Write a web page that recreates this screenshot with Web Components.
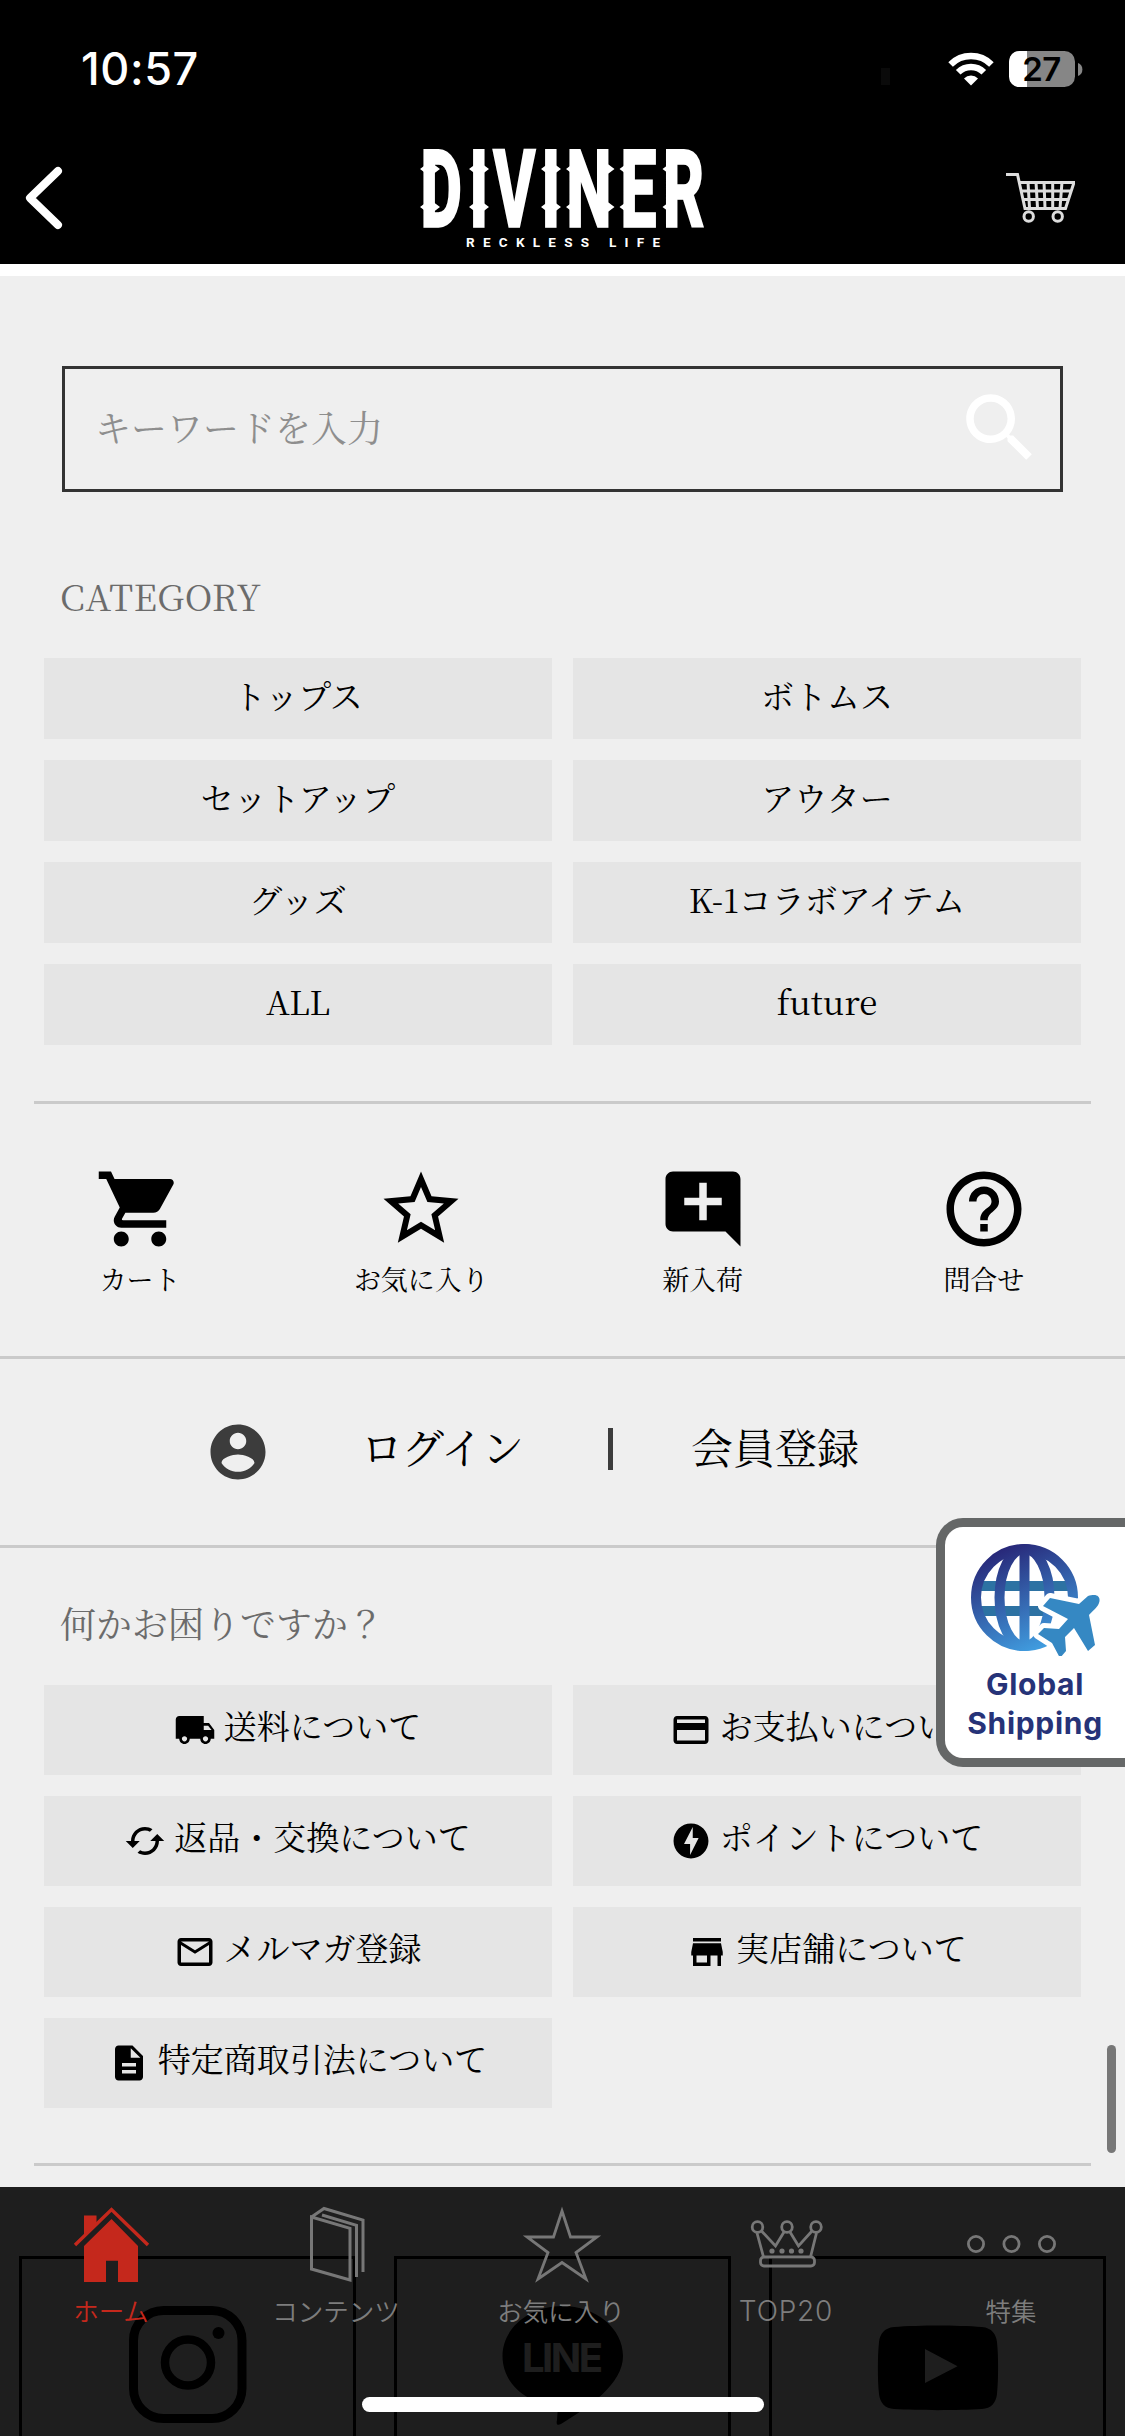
<!DOCTYPE html>
<html lang="ja">
<head>
<meta charset="utf-8">
<title>DIVINER</title>
<style>
html,body{margin:0;padding:0;background:#efefef}
body{width:1125px;height:2436px;overflow:hidden;color:#000;font-family:"Noto Serif CJK JP","Noto Serif JP","Liberation Serif","Noto Sans CJK JP",serif}
</style>
</head>
<body>
<shop-app></shop-app>
<script>
const define = (name, html) => customElements.define(name, class extends HTMLElement {
  connectedCallback() {
    if (this.shadowRoot) return;
    const t = document.createElement('template');
    t.innerHTML = typeof html === 'function' ? html(this) : html;
    this.attachShadow({ mode: 'open' }).appendChild(t.content.cloneNode(true));
  }
});

/* 24-unit filled glyphs */
const GLYPHS = {
  search: 'M15.5 14h-.79l-.28-.27C15.41 12.59 16 11.11 16 9.5 16 5.91 13.09 3 9.5 3S3 5.91 3 9.5 5.91 16 9.5 16c1.61 0 3.09-.59 4.23-1.57l.27.28v.79l5 4.99L20.49 19l-4.99-5zm-6 0C7.01 14 5 11.99 5 9.5S7.01 5 9.5 5 14 7.01 14 9.5 11.99 14 9.5 14z',
  cart: 'M7 18c-1.1 0-1.99.9-1.99 2S5.9 22 7 22s2-.9 2-2-.9-2-2-2zM1 2v2h2l3.6 7.59-1.35 2.45c-.16.28-.25.61-.25.96 0 1.1.9 2 2 2h12v-2H7.42c-.14 0-.25-.11-.25-.25l.03-.12.9-1.63h7.45c.75 0 1.41-.41 1.75-1.03l3.58-6.49c.08-.14.12-.31.12-.48 0-.55-.45-1-1-1H5.21l-.94-2H1zm16 16c-1.1 0-1.99.9-1.99 2s.89 2 1.99 2 2-.9 2-2-.9-2-2-2z',
  star: 'M22 9.24l-7.19-.62L12 2 9.19 8.63 2 9.24l5.46 4.73L5.82 21 12 17.27 18.18 21l-1.63-7.03L22 9.24zM12 15.4l-3.76 2.27 1-4.28-3.32-2.88 4.38-.38L12 6.1l1.71 4.04 4.38.38-3.32 2.88 1 4.28L12 15.4z',
  comment: 'M21.99 4c0-1.1-.89-2-1.99-2H4c-1.1 0-2 .9-2 2v12c0 1.1.9 2 2 2h14l4 4-.01-18zM17 11h-4v4h-2v-4H7V9h4V5h2v4h4v2z',
  help: 'M11 18h2v-2h-2v2zm1-16C6.48 2 2 6.48 2 12s4.48 10 10 10 10-4.48 10-10S17.52 2 12 2zm0 18c-4.41 0-8-3.59-8-8s3.59-8 8-8 8 3.59 8 8-3.59 8-8 8zm0-14c-2.21 0-4 1.79-4 4h2c0-1.1.9-2 2-2s2 .9 2 2c0 2-3 1.75-3 5h2c0-2.25 3-2.5 3-5 0-2.21-1.79-4-4-4z',
  account: 'M12 2C6.48 2 2 6.48 2 12s4.48 10 10 10 10-4.48 10-10S17.52 2 12 2zm0 3c1.66 0 3 1.34 3 3s-1.34 3-3 3-3-1.34-3-3 1.34-3 3-3zm0 14.2c-2.5 0-4.71-1.28-6-3.22.03-1.99 4-3.08 6-3.08 1.99 0 5.97 1.09 6 3.08-1.29 1.94-3.5 3.22-6 3.22z',
  truck: 'M20 8h-3V4H3c-1.1 0-2 .9-2 2v11h2c0 1.66 1.34 3 3 3s3-1.34 3-3h6c0 1.66 1.34 3 3 3s3-1.34 3-3h2v-5l-3-4zM6 18.5c-.83 0-1.5-.67-1.5-1.5s.67-1.5 1.5-1.5 1.5.67 1.5 1.5-.67 1.5-1.5 1.5zm13.5-9l1.96 2.5H17V9.5h2.5zm-1.5 9c-.83 0-1.5-.67-1.5-1.5s.67-1.5 1.5-1.5 1.5.67 1.5 1.5-.67 1.5-1.5 1.5z',
  card: 'M20 4H4c-1.11 0-1.99.89-1.99 2L2 18c0 1.11.89 2 2 2h16c1.11 0 2-.89 2-2V6c0-1.11-.89-2-2-2zm0 14H4v-6h16v6zm0-10H4V6h16v2z',
  cached: 'M19 8l-4 4h3c0 3.31-2.69 6-6 6-1.01 0-1.97-.25-2.8-.7l-1.46 1.46C8.97 19.54 10.43 20 12 20c4.42 0 8-3.58 8-8h3l-4-4zM6 12c0-3.31 2.69-6 6-6 1.01 0 1.97.25 2.8.7l1.46-1.46C15.03 4.46 13.57 4 12 4c-4.42 0-8 3.58-8 8H1l4 4 4-4H6z',
  bolt: 'M12 2.02c-5.51 0-9.98 4.47-9.98 9.98s4.47 9.98 9.98 9.98 9.98-4.47 9.98-9.98S17.51 2.02 12 2.02zM11.48 20v-6.26H8L13 4v6.26h3.35L11.48 20z',
  mail: 'M20 4H4c-1.1 0-1.99.9-1.99 2L2 18c0 1.1.9 2 2 2h16c1.1 0 2-.9 2-2V6c0-1.1-.9-2-2-2zm0 14H4V8l8 5 8-5v10zm-8-7L4 6h16l-8 5z',
  store: 'M20 4H4v2h16V4zm1 10v-2l-1-5H4l-1 5v2h1v6h10v-6h4v6h2v-6h1zm-9 4H6v-4h6v4z',
  doc: 'M14 2H6c-1.1 0-1.99.9-1.99 2L4 20c0 1.1.89 2 1.99 2H18c1.1 0 2-.9 2-2V8l-6-6zm2 16H8v-2h8v2zm0-4H8v-2h8v2zm-3-5V3.5L18.5 9H13z'
};
define('ui-glyph', el => `<style>:host{display:block;flex:none;width:var(--size,42px);height:var(--size,42px)}svg{display:block;width:100%;height:100%;fill:currentColor}</style>
<svg viewBox="0 0 24 24"><path d="${GLYPHS[el.getAttribute('name')]}"/></svg>`);

/* 80-unit line art for the tab bar */
const TABS = {
  home: '<path d="M12 10.500H24.500V22L12 34.500ZM39.500 14 66 41V77H46V55.500H34V77H12V41Z" fill="#c5281c"/><path d="M3 40 39.500 4 76 40" transform="translate(0 4)" fill="none" stroke="#1e1e1e" stroke-width="6"/><path d="M39.500 15.500 66 42V77H46V55.500H33.500V77H12V42Z" fill="#c5281c"/><path d="M3 40 39.500 4.500 76 40" fill="none" stroke="#c5281c" stroke-width="3.400"/>',
  book: '<path d="M14.500 12 53 23.300V75L14.500 64ZM14.500 12 27 3.500 66 15V67M25 10 59.500 20.300V72" fill="none" stroke="#777" stroke-width="3"/>',
  star: '<path d="M40 6 48.500 32H75L54 47.500 64 74 40 57.500 16 74 26 47.500 5 32H31.500Z" fill="none" stroke="#777" stroke-width="2.800"/>',
  crown: '<g fill="none" stroke="#777" stroke-width="2.800"><circle cx="10.500" cy="22" r="5.300"/><circle cx="40" cy="22" r="5.300"/><circle cx="69" cy="22" r="5.300"/><path d="M10 28 16.500 52M14.500 26 28.500 41 37 27M43 27 51.500 41 65 26M69.500 28 63.500 52"/><rect x="13.500" y="52" width="54" height="9" rx="3.500"/></g><g fill="#777"><circle cx="25" cy="46" r="2.600"/><circle cx="35" cy="46" r="2.600"/><circle cx="44.500" cy="46" r="2.600"/><circle cx="54" cy="46" r="2.600"/></g>',
  dots: '<g fill="none" stroke="#777" stroke-width="2.800"><circle cx="4" cy="39" r="7.600"/><circle cx="39.500" cy="39" r="7.600"/><circle cx="75" cy="39" r="7.600"/></g>'
};
define('tab-item', el => `<style>
:host{flex:1;display:flex;flex-direction:column;align-items:center;padding-top:18px;color:#7d7d7d;font:350 25.500px/38px "Noto Sans CJK JP",sans-serif}
:host([active]){color:#c5281c}
:host([latin]){font-family:Inter,sans-serif;font-size:28px;letter-spacing:.8px}
svg{display:block;overflow:visible;margin-left:-2px}
span{display:block;margin-top:6px;margin-left:-3px;white-space:nowrap}
:host([latin]) span{margin-top:7px}
</style><svg width="80" height="80" viewBox="0 0 80 80">${TABS[el.getAttribute('icon')]}</svg><span><slot></slot></span>`);

define('tab-bar', `<style>:host{position:absolute;left:0;right:0;bottom:0;height:249px;background:rgba(0,0,0,.875);display:flex;flex-direction:column;justify-content:space-between;align-items:center}
nav{display:flex;width:100%}i{display:block;width:402px;height:15px;border-radius:8px;background:#fff;margin-bottom:24px}</style>
<nav><tab-item icon="home" active>ホーム</tab-item><tab-item icon="book">コンテンツ</tab-item><tab-item icon="star">お気に入り</tab-item><tab-item icon="crown" latin>TOP20</tab-item><tab-item icon="dots">特集</tab-item></nav><i></i>`);

define('status-bar', `<style>:host{display:flex;height:138px;box-sizing:border-box;align-items:center;padding:0 43px 0 81px;color:#fff;font-family:Inter,sans-serif}
b{font:500 45px/54px Inter,sans-serif;letter-spacing:.6px;flex:1}
i{width:9px;height:17px;background:#0a0a0a;margin:15px 58px 0 0}
svg{overflow:visible}.wifi{margin:0 14px 0 0}</style>
<b>10:57</b><i></i><svg class="wifi" width="46" height="34" viewBox="0 0 46 34"><g fill="none" stroke="#fff" stroke-width="6.500"><path d="M2.600 12.500A29 29 0 0 1 43.400 12.500"/><path d="M10.200 20.300A18 18 0 0 1 35.800 20.300"/></g><path d="M23 33.500 16 26.400A10 10 0 0 1 30 26.400Z" fill="#fff"/></svg>
<svg width="74" height="36" viewBox="0 0 74 36"><defs><clipPath id="c"><rect x="1" width="66" height="36" rx="10.500"/></clipPath></defs><g clip-path="url(#c)"><rect width="67" height="36" fill="#868686"/><rect width="19" height="36" fill="#fff"/></g><path d="M70 12a7 7 0 0 1 0 13Z" fill="#868686"/><text x="33.500" y="30" text-anchor="middle" font-family="Inter,sans-serif" font-weight="600" font-size="33" letter-spacing="-.5" fill="#000">27</text></svg>`);

define('brand-logo', `<style>:host{display:block}svg{display:block;overflow:visible}</style>
<svg width="300" height="108" viewBox="0 0 300 108"><g fill="#fff">
<g transform="translate(0 85.500) scale(.6 1)"><text font-family="Roboto,sans-serif" font-weight="700" font-size="106" stroke="#fff" stroke-width="3.500" y="0" x="12.600 94.200 134.300 214.200 256 346 416.500">DIVINER</text></g>
<path d="M7 29l6-4.500h8l6 4.500-6 4.500h-8zM7 67l6-4.500h8l6 4.500-6 4.500h-8zM56 29l6-4.500h8l6 4.500-6 4.500h-8zM56 67l6-4.500h8l6 4.500-6 4.500h-8zM128 29l6-4.500h8l6 4.500-6 4.500h-8zM128 67l6-4.500h8l6 4.500-6 4.500h-8zM153 29l6-4.500h4v9h-4zM153 67l6-4.500h4v9h-4zM201.500 29l-6-4.500h-4v9h4zM201.500 67l-6-4.500h-4v9h4zM206.500 29l6-4.500h4v9h-4zM206.500 67l6-4.500h4v9h-4zM249.500 29l6-4.500h4v9h-4zM249.500 67l6-4.500h4v9h-4z"/>
<text x="53" y="106.500" textLength="194" lengthAdjust="spacing" font-family="Roboto,sans-serif" font-weight="700" font-size="13.500">RECKLESS LIFE</text></g></svg>`);

define('app-header', `<style>:host{display:block;background:#000;height:264px;border-bottom:12px solid #fff}
div{display:flex;align-items:flex-start;height:126px;padding:2px 50px 0 24px}
svg{display:block}.back{margin-top:25px}.cart{margin:30px 0 0 auto}brand-logo{margin-left:349px}</style>
<status-bar></status-bar><div>
<svg class="back" width="40" height="66" viewBox="0 0 40 66"><path d="M34 6 6 33 34 60" fill="none" stroke="#fff" stroke-width="8" stroke-linecap="round" stroke-linejoin="round"/></svg>
<brand-logo></brand-logo>
<svg class="cart" width="70" height="54" viewBox="0 0 70 54"><g fill="none" stroke="#ddd" stroke-width="3"><path d="M1 4.500H12.500L20 38.500H60.500L69 12.500H14.500M16 21H66M18 29.500H64M23 12 24.500 38M31 12 32.500 38M39 12 40 38M47.700 12V38M57 12 55 38"/><circle cx="23.700" cy="46.500" r="4.700"/><circle cx="52.700" cy="46.500" r="4.700"/></g></svg></div>`);

define('search-box', `<style>:host{display:flex;box-sizing:border-box;width:1001px;height:126px;margin:90px 0 0 62px;border:3px solid #333;padding:0 15px 3px 30px;align-items:center;justify-content:space-between;color:#8e8e8e;font-size:36px}
ui-glyph{--size:90px;color:#fff}span{padding-bottom:3px}</style><span>キーワードを入力</span><ui-glyph name="search"></ui-glyph>`);

define('section-title', `<style>:host{display:block;padding-left:60px;height:60px;color:#6b6b6b;font-size:36px;line-height:60px}:host([latin]){letter-spacing:.4px}</style><slot></slot>`);

define('link-grid', `<style>:host{display:grid;grid-template-columns:508px 508px;column-gap:21px;row-gap:21px;padding-left:44px}</style><slot></slot>`);
define('link-tile', el => `<style>:host{display:flex;align-items:center;justify-content:center;height:81px;background:#e5e5e5;font-size:33px;line-height:48px;white-space:nowrap}
:host([icon]){height:90px}span{padding-bottom:8px}:host([icon]) span{padding-bottom:10px}ui-glyph{margin-right:8px}:host([icon]) span{margin-right:1px}</style>${el.hasAttribute('icon') ? `<ui-glyph name="${el.getAttribute('icon')}"></ui-glyph>` : ''}<span><slot></slot></span>`);

define('rule-line', `<style>:host{display:block;height:3px;background:#cacaca}:host([inset]){margin:0 34px}</style>`);

define('quick-link', el => `<style>:host{flex:1;display:flex;flex-direction:column;align-items:center;font-size:27px;line-height:40px}ui-glyph{--size:90px;margin-left:-1px}span{margin-top:5px;margin-left:-1px}</style><ui-glyph name="${el.getAttribute('icon')}"></ui-glyph><span><slot></slot></span>`);

define('member-row', `<style>:host{display:flex;height:186px;box-sizing:border-box;padding-left:205px;align-items:center;font-size:42px;line-height:60px}
ui-glyph{--size:66px;color:#3c3c3c}.in{margin:0 0 12px 90px;width:247px;letter-spacing:-1px}i{width:5px;height:42px;background:#3c3c3c;margin-bottom:6px}.up{margin:0 0 12px 78px}</style>
<ui-glyph name="account"></ui-glyph><span class="in">ログイン</span><i></i><span class="up">会員登録</span>`);

define('social-links', `<style>:host{display:flex;gap:38px;padding:90px 19px 0}div{box-sizing:border-box;width:337px;height:220px;border:3px solid #000}svg{display:block;width:331px;height:177px}</style>
<div><svg viewBox="22 2259 331 177"><g fill="none" stroke="#000"><rect x="133.500" y="2310.500" width="108.500" height="108" rx="30" stroke-width="9"/><circle cx="188" cy="2362.500" r="23" stroke-width="8.500"/></g><circle cx="218.500" cy="2333" r="6"/></svg></div>
<div><svg viewBox="397 2259 331 177"><path d="M562.500 2306c33 0 60.500 22 60.500 50 0 28-34 51-62 68-4 2-5 0-4-4l1-14c-31-2-55.500-22-55.500-50 0-28 27-50 60-50z"/><text x="522" y="2371.500" textLength="81" lengthAdjust="spacing" font-family="Inter,sans-serif" font-weight="700" font-size="40" fill="#efefef">LINE</text></svg></div>
<div><svg viewBox="772 2259 331 177"><path d="M938 2325.500c14 0 32 .5 44 1.500 10 1 14 7 15 15 1.500 14 1.500 38 0 52-1 9-6 14.500-15 15-24 1.500-64 1.500-88 0-9-.5-14-6-15-15-1.500-14-1.500-38 0-52 1-8 5-14 15-15 12-1 30-1.500 44-1.500zM925 2349v34l32.500-16.700z" fill-rule="evenodd"/></svg></div>`);

define('global-shipping', `<style>:host{position:absolute;left:936px;top:1518px;width:189px;height:249px;box-sizing:border-box;border:9px solid #656767;border-right:0;border-radius:27px 0 0 27px;background:#fff;text-align:center;color:#263378;font:700 30px/39px Inter,sans-serif}
svg{display:block;margin:17px 0 0 26px}p{margin:9px 0 0;width:180px;letter-spacing:.7px}</style>
<svg width="132" height="112" viewBox="971 1544 132 112"><defs><linearGradient id="g" gradientUnits="userSpaceOnUse" x1="1000" y1="1550" x2="1044" y2="1650"><stop offset="0" stop-color="#282879"/><stop offset="1" stop-color="#41a0e2"/></linearGradient></defs>
<path d="M979 1586H1070M979 1611H1070" stroke="#2d72a3" stroke-width="10"/>
<g fill="none" stroke="url(#g)" stroke-width="10"><circle cx="1024.500" cy="1597.500" r="48.500"/><ellipse cx="1024.500" cy="1597.500" rx="25" ry="48.500"/><path d="M1024.500 1549V1646.010L1024.510 1549"/></g>
<path d="M1094 1595c5 0 6.500 4 5 8-1 3-3 5-10 12l6 30-7 6-14-23-9 9 1 14-6 7-8-15-14-9 6-6 15 1 9-10-25-13 7-8 29 6 9-8c2-1 4-1 6-1z" fill="#3588c3" stroke="#fff" stroke-width="10" stroke-linejoin="round" paint-order="stroke"/></svg>
<p>Global<br>Shipping</p>`);

define('shop-app', `<style>:host{display:block;position:relative;width:1125px;height:2436px;overflow:hidden;background:#efefef}
.quick{display:flex;height:192px;padding-top:60px}
.scroll{position:absolute;left:1107px;top:2045px;width:9px;height:108px;border-radius:5px;background:#777}</style>
<app-header></app-header><main>
<search-box></search-box>
<section-title latin style="margin:74px 0 32px">CATEGORY</section-title>
<link-grid><link-tile>トップス</link-tile><link-tile>ボトムス</link-tile><link-tile>セットアップ</link-tile><link-tile>アウター</link-tile><link-tile>グッズ</link-tile><link-tile>K-1コラボアイテム</link-tile><link-tile>ALL</link-tile><link-tile>future</link-tile></link-grid>
<rule-line inset style="margin-top:56px"></rule-line>
<div class="quick"><quick-link icon="cart">カート</quick-link><quick-link icon="star">お気に入り</quick-link><quick-link icon="comment">新入荷</quick-link><quick-link icon="help">問合せ</quick-link></div>
<rule-line></rule-line><member-row></member-row><rule-line></rule-line>
<section-title style="margin:45px 0 32px">何かお困りですか？</section-title>
<link-grid><link-tile icon="truck">送料について</link-tile><link-tile icon="card">お支払いについて</link-tile><link-tile icon="cached">返品・交換について</link-tile><link-tile icon="bolt">ポイントについて</link-tile><link-tile icon="mail">メルマガ登録</link-tile><link-tile icon="store">実店舗について</link-tile><link-tile icon="doc">特定商取引法について</link-tile></link-grid>
<rule-line inset style="margin-top:55px"></rule-line>
<social-links></social-links></main>
<div class="scroll"></div><global-shipping></global-shipping><tab-bar></tab-bar>`);
</script>
</body>
</html>
